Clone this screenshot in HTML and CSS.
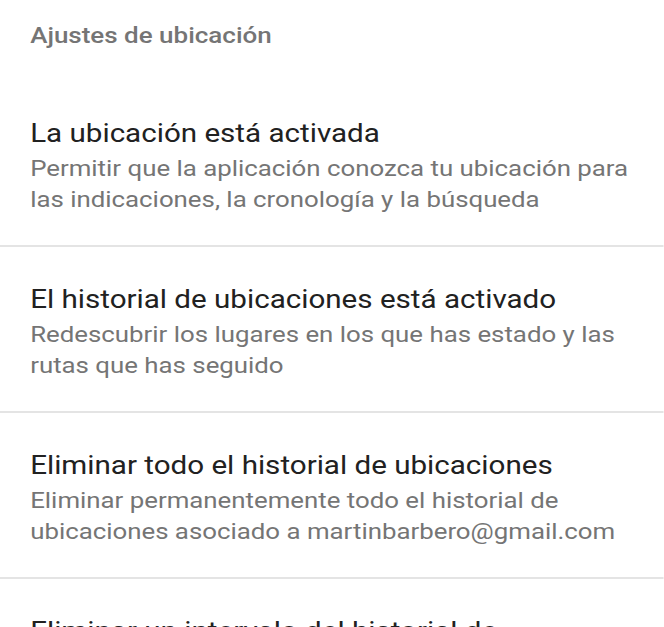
FILE: index.html
```html
<!DOCTYPE html>
<html lang="es">
<head>
<meta charset="utf-8">
<title>Ajustes de ubicación</title>
<link rel="stylesheet" href="styles.css">
</head>
<body>
<main class="settings">
  <h2 class="category">Ajustes de ubicación</h2>
  <ul class="prefs">
    <li class="pref">
      <div class="pref-title">La ubicación está activada</div>
      <div class="pref-summary">Permitir que la aplicación conozca tu ubicación para las indicaciones, la cronología y la búsqueda</div>
    </li>
    <li class="pref">
      <div class="pref-title">El historial de ubicaciones está activado</div>
      <div class="pref-summary">Redescubrir los lugares en los que has estado y las rutas que has seguido</div>
    </li>
    <li class="pref">
      <div class="pref-title">Eliminar todo el historial de ubicaciones</div>
      <div class="pref-summary">Eliminar permanentemente todo el historial de ubicaciones asociado a martinbarbero@gmail.com</div>
    </li>
    <li class="pref">
      <div class="pref-title">Eliminar un intervalo del historial de ubicaciones</div>
      <div class="pref-summary">Eliminar un intervalo de fechas del historial de ubicaciones</div>
    </li>
  </ul>
</main>
</body>
</html>
```
FILE: styles.css
```css
html, body {
  margin: 0;
  padding: 0;
  background: #ffffff;
}
body {
  font-family: Roboto, "Noto Sans", "Liberation Sans", sans-serif;
  overflow: hidden;
  height: 627px;
}
/* the captured screen is stretched horizontally by ~1.16 */
.settings {
  display: flex;
  flex-direction: column;
  width: 572px;
  transform: scaleX(1.16);
  transform-origin: 0 0;
}
.category {
  margin: 0;
  padding: 20px 21px 31px 26px;
  font-size: 22.4px;
  line-height: 30px;
  font-weight: 500;
  color: #757575;
}
.prefs {
  list-style: none;
  margin: 0;
  padding: 0;
}
.pref {
  padding: 34px 21px 30px 26px;
  border-bottom: 2px solid #e4e4e4;
}
.pref-title {
  font-size: 25.5px;
  line-height: 36px;
  color: #212121;
}
.pref-summary {
  margin-top: 2px;
  font-size: 22.25px;
  line-height: 31px;
  color: #757575;
}
```
